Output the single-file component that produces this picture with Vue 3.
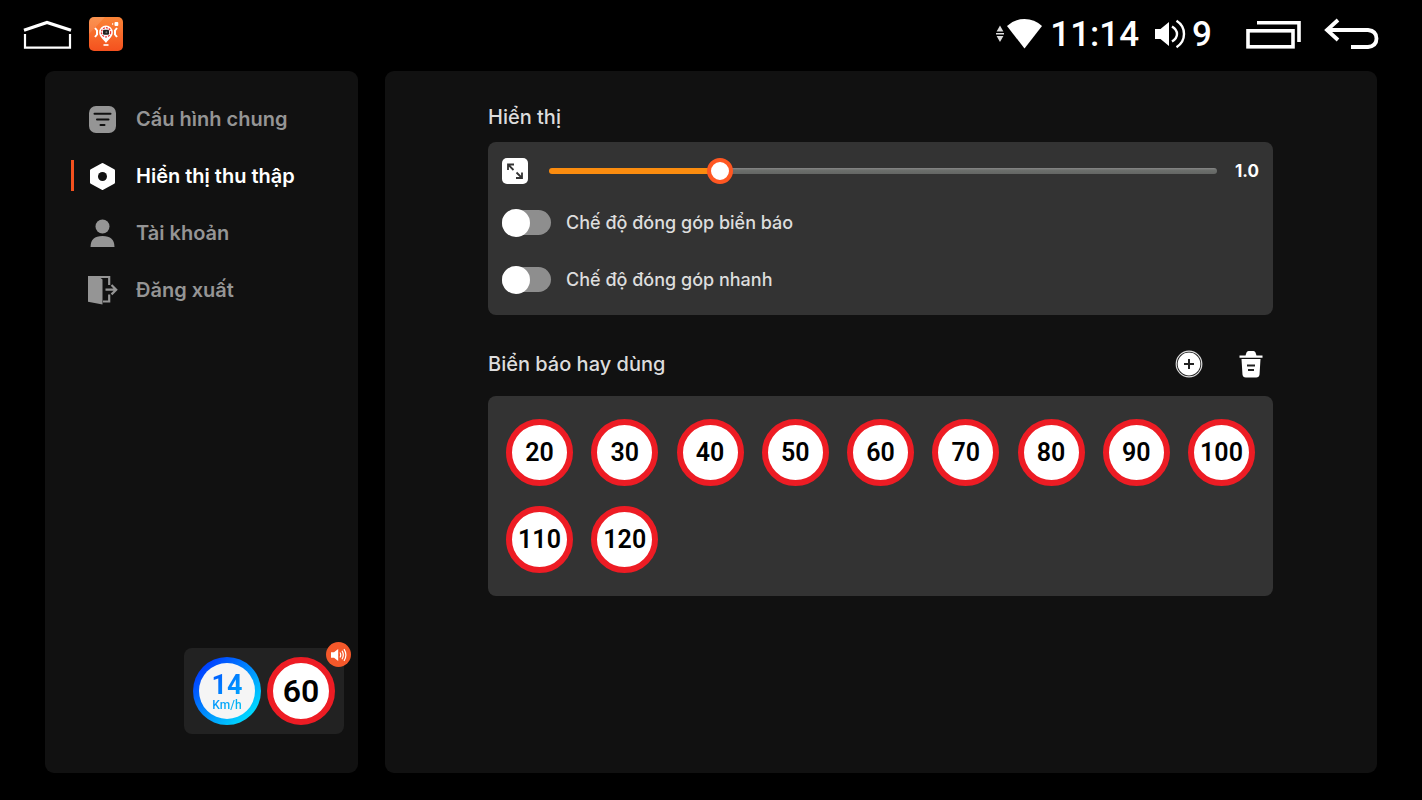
<template>
  <div class="screen">
    <header class="status-bar">
      <div class="status-left">
        <button class="icon-btn" aria-label="Home">
          <svg width="50" height="32" viewBox="0 0 50 32" fill="none" stroke="#fff">
            <path d="M1 12.2L24 4.5L48 12.2" stroke-width="3.2" />
            <path d="M2 16V29.6H47V16" stroke-width="2.2" />
          </svg>
        </button>
        <button class="icon-btn" aria-label="App">
          <svg width="34" height="34" viewBox="0 0 34 34">
            <defs>
              <linearGradient id="appBg" x1="0" y1="0" x2="0" y2="1">
                <stop offset="0" stop-color="#fb8538" />
                <stop offset="1" stop-color="#f4511e" />
              </linearGradient>
            </defs>
            <rect width="34" height="34" rx="5" fill="url(#appBg)" />
            <path d="M0 17V5Q0 0 5 0H16Z" fill="#fff" opacity=".12" />
            <path d="M17 26C14 22 10.200 19.500 10.200 15.300A6.800 6.800 0 0 1 23.800 15.300C23.800 19.500 20 22 17 26Z" fill="#fff" />
            <circle cx="17" cy="15.300" r="4.600" fill="#fff" stroke="#e33" stroke-width="1.300" stroke-dasharray="2 1" />
            <rect x="14" y="12.800" width="6" height="5" rx="1" fill="#222" />
            <circle cx="17.400" cy="15.300" r="1" fill="#777" />
            <path d="M6 11L8 13.500V17.500L6 20M28 11L26 13.500V17.500L28 20" fill="none" stroke="#fff" stroke-width="2" />
            <path d="M14.500 28H19.500" stroke="#fff" stroke-width="1.600" />
            <rect x="25.500" y="5" width="3.800" height="4" rx="1" fill="#fff" />
            <path d="M23 6L24.600 7L23 8Z" fill="#fff" />
          </svg>
        </button>
      </div>

      <div class="status-right">
        <svg class="wifi" width="48" height="34" viewBox="0 0 48 34" fill="#fff">
          <path d="M4 8.500L7.400 14.500H.6ZM4 25L.6 19H7.400ZM0 16H8V17.600H0Z" fill="#ddd" />
          <path d="M28.500 31.500L11 9Q18.500 2 28.500 2T46 9Z" />
        </svg>
        <span class="clock">11:14</span>
        <svg class="volume-icon" width="32" height="32" viewBox="0 0 32 32" fill="none" stroke="#fff" stroke-width="2.400">
          <path d="M1 11H6.500L15 4V28L6.500 21H1Z" fill="#fff" stroke="none" />
          <path d="M18 8.500Q23 11.500 23 16T18 23.500" />
          <path d="M22.500 2.800Q30 7.500 30 16T22.500 29.200" />
        </svg>
        <span class="volume">9</span>
        <button class="icon-btn recents" aria-label="Recent apps">
          <svg width="56" height="32" viewBox="0 0 56 32" fill="none" stroke="#fff">
            <path d="M11 4.800H53V24" stroke-width="3.600" />
            <rect x="2" y="12.800" width="45" height="16" stroke-width="3.600" />
          </svg>
        </button>
        <button class="icon-btn" aria-label="Back">
          <svg width="56" height="34" viewBox="0 0 56 34" fill="none" stroke="#fff" stroke-width="3.800">
            <path d="M14 3L3 13L14 23" />
            <path d="M3 13H44Q52.500 14 52.500 21.500T44 30H27" />
          </svg>
        </button>
      </div>
    </header>

    <div class="panels">
      <aside class="sidebar">
        <nav class="menu">
          <a
            v-for="item in menu"
            :key="item.id"
            href="#"
            class="menu-item"
            :class="{ active: item.id === current }"
            @click.prevent="current = item.id"
          >
            <svg v-if="item.id === 'general'" class="menu-icon" viewBox="0 0 32 32">
              <rect x="3" y="3" width="27" height="27" rx="7" fill="currentColor" />
              <path d="M8.500 10.800H24.500M11 16.500H22.500M14.500 22H18.500" stroke="#111" stroke-width="2" stroke-linecap="round" />
            </svg>
            <svg v-else-if="item.id === 'display'" class="menu-icon" viewBox="0 0 32 32">
              <path d="M16.500 4.500L27.500 10.500V22.500L16.500 28.500L5.500 22.500V10.500Z" fill="currentColor" stroke="currentColor" stroke-width="3" stroke-linejoin="round" />
              <circle cx="16.500" cy="16.500" r="4.500" fill="#111" />
            </svg>
            <svg v-else-if="item.id === 'account'" class="menu-icon" viewBox="0 0 32 32" fill="currentColor">
              <circle cx="16.500" cy="9.500" r="7" />
              <path d="M4.500 30Q4.500 19 16.500 19T28.500 30Z" />
            </svg>
            <svg v-else class="menu-icon" viewBox="0 0 32 32" fill="none" stroke="currentColor">
              <path d="M2 2H12L16.500 5.500V30.500L2 27.800Z" fill="currentColor" stroke="none" />
              <path d="M4 3H23.200V11M23.200 20.500V27.500H17" stroke-width="2.200" />
              <path d="M19.500 15.700H30M25.500 11L30.200 15.700L25.500 20.400" stroke-width="2.200" />
            </svg>
            <span>{{ item.label }}</span>
          </a>
        </nav>

        <div class="speed-widget">
          <div class="speed">
            <div class="speed-inner">
              <strong>{{ speed }}</strong>
              <small>Km/h</small>
            </div>
          </div>
          <div class="sign limit">60</div>
          <button class="sound-badge" aria-label="Sound">
            <svg width="18" height="18" viewBox="0 0 18 18" fill="none" stroke="#fff" stroke-width="1.200">
              <path d="M1 6.300H4L8.200 3V15L4 11.700H1Z" fill="#fff" stroke="none" />
              <path d="M10 6.500Q11.500 9 10 11.500M12 4.800Q14.600 9 12 13.200M14 3.200Q17.800 9 14 14.800" />
            </svg>
          </button>
        </div>
      </aside>

      <main class="content">
        <section class="display-section">
          <h2>Hiển thị</h2>
          <div class="card settings-card">
            <div class="slider-row">
              <label for="scale" class="scale-icon" aria-label="Kích thước">
                <svg width="26" height="26" viewBox="0 0 26 26" fill="none" stroke="#333" stroke-width="1.800">
                  <path d="M6 12V6.500H12M6.500 7L11.500 12M20 14.500V20H14M19.500 19.500L14.500 14.500" />
                </svg>
              </label>
              <input
                id="scale"
                v-model.number="scale"
                type="range"
                min="0.3"
                max="3.15"
                step="0.05"
                :style="{ '--fill': fill }"
              />
              <output for="scale">{{ scale.toFixed(1) }}</output>
            </div>
            <label v-for="mode in modes" :key="mode.label" class="toggle-row">
              <input v-model="mode.on" type="checkbox" />
              <span>{{ mode.label }}</span>
            </label>
          </div>
        </section>

        <section>
          <div class="section-head">
            <h2>Biển báo hay dùng</h2>
            <div class="actions">
              <button class="icon-btn" aria-label="Thêm">
                <svg width="28" height="28" viewBox="0 0 28 28" fill="none">
                  <circle cx="14" cy="14" r="12.800" fill="#111" stroke="#ddd" stroke-width="1.200" />
                  <circle cx="14" cy="14" r="11.400" fill="#fff" />
                  <path d="M9 14H19M14 9V19" stroke="#222" stroke-width="2" />
                </svg>
              </button>
              <button class="icon-btn" aria-label="Xóa">
                <svg width="24" height="28" viewBox="0 0 24 28" fill="#fff">
                  <path d="M.5 5.500H6.500L7.500 2.500Q8 1 9.500 1H14.500Q16 1 16.500 2.500L17.500 5.500H23.500V7.800H.5Z" />
                  <path d="M2.500 9H21.500L20.500 24.500Q20.200 27.500 17.200 27.500H6.800Q3.800 27.500 3.500 24.500Z" />
                  <path d="M8 15.500H16M9 20H15" stroke="#222" stroke-width="1.800" />
                </svg>
              </button>
            </div>
          </div>
          <div class="card sign-grid">
            <button v-for="sign in signs" :key="sign" class="sign">{{ sign }}</button>
          </div>
        </section>
      </main>
    </div>
  </div>
</template>

<script setup>
import { computed, ref } from 'vue'

const menu = [
  { id: 'general', label: 'Cấu hình chung' },
  { id: 'display', label: 'Hiển thị thu thập' },
  { id: 'account', label: 'Tài khoản' },
  { id: 'logout', label: 'Đăng xuất' }
]
const current = ref('display')

const speed = ref(14)
const scale = ref(1)
const fill = computed(() => `${((scale.value - 0.3) / 2.85) * 100}%`)

const modes = ref([
  { label: 'Chế độ đóng góp biển báo', on: false },
  { label: 'Chế độ đóng góp nhanh', on: false }
])

const signs = [20, 30, 40, 50, 60, 70, 80, 90, 100, 110, 120]
</script>

<style>
body {
  margin: 0;
  background: #000;
}
</style>

<style scoped>
* {
  box-sizing: border-box;
}

.screen {
  display: flex;
  flex-direction: column;
  min-height: 100vh;
  background: #000;
  color: #fff;
  font-family: Inter, "Noto Sans", sans-serif;
}

button {
  padding: 0;
  border: none;
  cursor: pointer;
}

svg {
  display: block;
}

.icon-btn {
  background: transparent;
}

/* Status bar */
.status-bar {
  display: flex;
  justify-content: space-between;
  height: 71px;
  padding: 0 42px 4px 23px;
}

.status-left,
.status-right {
  display: flex;
  align-items: center;
}

.status-left {
  gap: 16px;
}

.clock,
.volume {
  padding-top: 2px;
  font-family: Roboto, sans-serif;
  font-size: 35px;
  line-height: 40px;
  font-weight: 500;
}

.clock {
  margin: 0 15px 0 6px;
}

.volume {
  margin: 0 34px 0 6px;
}

.recents {
  margin-right: 22px;
}

/* Panels */
.panels {
  flex: 1;
  display: grid;
  grid-template-columns: 313px 1fr;
  gap: 27px;
  padding: 0 45px 27px;
}

.sidebar,
.content {
  background: #111;
  border-radius: 9px;
}

.sidebar {
  display: flex;
  flex-direction: column;
  justify-content: space-between;
  padding: 19px 14px 39px 26px;
}

.menu-item {
  display: flex;
  align-items: center;
  gap: 18px;
  height: 57px;
  color: #959595;
  font-size: 20px;
  line-height: 24px;
  font-weight: 600;
  text-decoration: none;
}

.menu-item::before {
  content: "";
  width: 3px;
  height: 31px;
  margin-right: -6px;
}

.menu-item.active {
  color: #fff;
}

.menu-item.active::before {
  background: #f4511e;
}

.menu-icon {
  width: 32px;
  height: 32px;
}

/* Speed widget */
.speed-widget {
  position: relative;
  align-self: flex-end;
  display: flex;
  gap: 6px;
  padding: 9px;
  background: #222;
  border-radius: 8px;
}

.speed {
  width: 68px;
  height: 68px;
  padding: 6px;
  border-radius: 50%;
  background: linear-gradient(135deg, #0040ff 15%, #00d8ff 85%);
}

.speed-inner {
  display: flex;
  flex-direction: column;
  align-items: center;
  justify-content: center;
  height: 100%;
  border-radius: 50%;
  background: #f5f5f5;
  font-family: Roboto, sans-serif;
}

.speed strong,
.speed small {
  background: linear-gradient(135deg, #0055ff, #00aaff);
  background-clip: text;
  color: transparent;
}

.speed strong {
  font-size: 27px;
  line-height: 28px;
}

.speed small {
  background-image: linear-gradient(135deg, #0090ff, #00c0f0);
  font-size: 12px;
  line-height: 12px;
  font-weight: 500;
}

.sign {
  display: flex;
  align-items: center;
  justify-content: center;
  width: 67px;
  height: 67px;
  border: 6px solid #ed1c24;
  border-radius: 50%;
  background: #fff;
  color: #000;
  font-family: Roboto, sans-serif;
  font-size: 25px;
  line-height: 28px;
  font-weight: 600;
}

.limit {
  width: 68px;
  height: 68px;
  font-size: 32px;
}

.sound-badge {
  position: absolute;
  top: -6px;
  right: -7px;
  display: flex;
  align-items: center;
  justify-content: center;
  width: 25px;
  height: 25px;
  border-radius: 50%;
  background: #f4582a;
}

/* Content */
.content {
  display: flex;
  flex-direction: column;
  gap: 33px;
  padding: 32px 104px 32px 103px;
}

h2 {
  margin: 0;
  color: #ddd;
  font-size: 20px;
  line-height: 28px;
  font-weight: 500;
}

.card {
  background: #333;
  border-radius: 8px;
}

.display-section h2 {
  margin-bottom: 11px;
}

.settings-card {
  padding: 0 14px 7px;
}

.slider-row {
  display: flex;
  align-items: center;
  height: 52px;
  padding-top: 6px;
}

.scale-icon {
  border-radius: 5px;
  background: #fff;
}

.slider-row input {
  flex: 1;
  appearance: none;
  height: 26px;
  margin: 0 18px 0 21px;
  background: transparent;
}

.slider-row input::-webkit-slider-runnable-track {
  height: 6px;
  border-radius: 3px;
  background: linear-gradient(to right, #fb8c0f var(--fill), transparent var(--fill)),
    linear-gradient(#888, #6c6f6c 35%, #646664);
}

.slider-row input::-webkit-slider-thumb {
  appearance: none;
  width: 26px;
  height: 26px;
  margin-top: -10px;
  border: 4px solid #ff5722;
  border-radius: 50%;
  background: #fff;
}

.slider-row output {
  font-size: 17px;
  line-height: 24px;
  font-weight: 700;
}

.toggle-row {
  display: flex;
  align-items: center;
  gap: 15px;
  height: 57px;
  color: #ddd;
  font-size: 18px;
  line-height: 24px;
  font-weight: 500;
}

.toggle-row input {
  appearance: none;
  display: flex;
  align-items: center;
  width: 49px;
  height: 25px;
  margin: 0;
  border-radius: 13px;
  background: #8e8e8e;
}

.toggle-row input::before {
  content: "";
  flex: none;
  width: 28px;
  height: 28px;
  border-radius: 50%;
  background: #fff;
}

.toggle-row input:checked {
  justify-content: flex-end;
  background: #fb8c0f;
}

.section-head {
  display: flex;
  align-items: center;
  justify-content: space-between;
  height: 32px;
  margin-bottom: 16px;
}

.actions {
  display: flex;
  gap: 36px;
  padding-right: 10px;
}

.sign-grid {
  display: grid;
  grid-template-columns: repeat(9, 67px);
  justify-content: space-between;
  row-gap: 20px;
  padding: 23px 18px;
}
</style>
